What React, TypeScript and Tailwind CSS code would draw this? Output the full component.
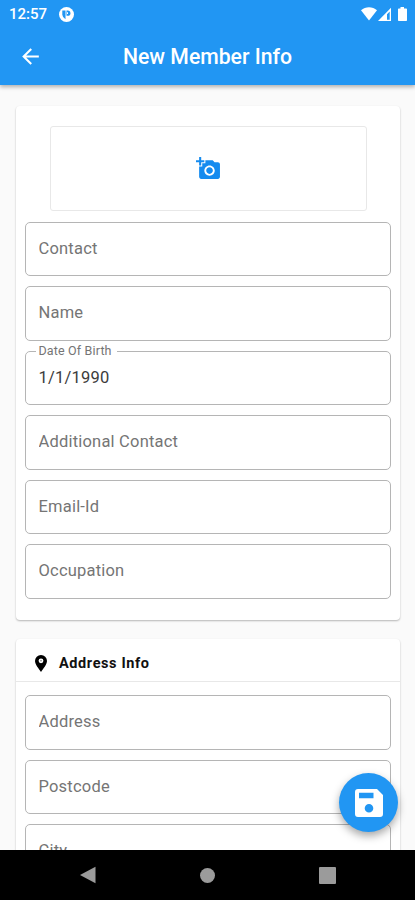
import { useState } from 'react';
import { MdAddAPhoto, MdArrowBack } from 'react-icons/md';

interface FieldProps {
  label: string;
  value?: string;
}

const memberFields: FieldProps[] = [
  { label: 'Contact' },
  { label: 'Name' },
  { label: 'Date Of Birth', value: '1/1/1990' },
  { label: 'Additional Contact' },
  { label: 'Email-Id' },
  { label: 'Occupation' },
];

const addressFields: FieldProps[] = [
  { label: 'Address' },
  { label: 'Postcode' },
  { label: 'City' },
];

function StatusBar() {
  return (
    <div className="flex h-7 items-center justify-between pr-[7px] pl-[9px] text-white">
      <div className="flex items-center gap-[11.5px]">
        <span className="text-[15px] leading-7 font-medium">12:57</span>
        <svg className="h-[15px] w-[15px]" viewBox="0 0 15 15">
          <circle cx="7.5" cy="7.5" r="7.5" fill="#fff" />
          <path d="M3.3 3.6h3.2v8.6a5.5 5.5 0 0 1-3.2-4.400z" fill="#2196f3" />
          <path d="M7.500 3.600h1.300a2.600 2.600 0 0 1 0 5.200H7.500z" fill="#2196f3" />
          <path d="M8 5.300h1v1.800H8z" fill="#fff" />
        </svg>
      </div>
      <svg className="h-[15px] w-[47px]" viewBox="0 0 47 15" fill="#fff">
        <path d="M0 3.2C4.5-.7 11.500-.7 16 3.200L8 13.500z" />
        <path fillRule="evenodd" d="M17 14L30 .8V14zM26 12.700h2.700V4.500L26 7.200z" />
        <path d="M39.500 0h3.500v1.500h2.200q.8 0 .8.800V13.200q0 .8-.8.800h-7.400q-.8 0-.8-.8V2.300q0-.8.800-.8h1.700z" />
      </svg>
    </div>
  );
}

function Header() {
  return (
    <header className="z-10 h-[85px] shrink-0 bg-[#2196f3] shadow-[0_2px_4px_rgba(0,0,0,0.3)]">
      <StatusBar />
      <div className="grid h-[57px] grid-cols-[60px_1fr_60px] items-center text-white">
        <button className="flex justify-center" aria-label="Back">
          <MdArrowBack className="h-[25px] w-[25px]" />
        </button>
        <h1 className="text-center text-[21.200px] leading-7 font-medium">New Member Info</h1>
      </div>
    </header>
  );
}

function Field({ label, value }: FieldProps) {
  const [text, setText] = useState(value ?? '');

  return (
    <fieldset className="h-[54.500px] min-w-0 rounded-[5px] border border-[#b5b5b5] px-[12.500px]">
      {value && (
        <legend className="-ml-[3px] h-0 pr-[5px] pl-[3px] text-[12.500px] leading-[0px] tracking-[0.15px] text-[#757575]">
          {label}
        </legend>
      )}
      <input
        className="block h-[51px] w-full bg-transparent text-[16.500px] tracking-[0.2px] text-[#3c3c3c] outline-none placeholder:text-[#757575]"
        aria-label={label}
        placeholder={value ? undefined : label}
        value={text}
        onChange={(e) => setText(e.target.value)}
      />
    </fieldset>
  );
}

function NavigationBar() {
  return (
    <nav className="z-10 grid h-[50px] shrink-0 grid-cols-3 items-center justify-items-center bg-black px-[28px]">
      <svg className="h-[18px] w-[18px]" viewBox="0 0 18 18" fill="#9b9b9b">
        <path d="M1 9L16.500 .7V17.300z" />
      </svg>
      <div className="h-[15px] w-[15px] rounded-full bg-[#9b9b9b]" />
      <div className="h-[17px] w-[17px] rounded-[1px] bg-[#9b9b9b]" />
    </nav>
  );
}

export default function App() {
  return (
    <div className="relative flex h-[900px] w-[415px] flex-col overflow-hidden bg-[#fafafa] font-['Roboto',sans-serif]">
      <Header />

      <main className="min-h-0 flex-1 overflow-hidden pt-[21px] pr-[15px] pl-4">
        {/* Member details */}
        <section className="h-[514px] rounded-[4px] bg-white px-[9px] pt-[19.500px] shadow-[0_1px_2px_rgba(0,0,0,0.28)]">
          <button
            className="mx-auto flex h-[85.500px] w-[317px] items-center justify-center rounded-[3px] border border-[#e8e8e8]"
            aria-label="Add photo"
          >
            <MdAddAPhoto className="h-[25px] w-[25px] text-[#158bef]" />
          </button>
          <div className="mt-[10.500px] flex flex-col gap-[10px]">
            {memberFields.map((field) => (
              <Field key={field.label} {...field} />
            ))}
          </div>
        </section>

        {/* Address details */}
        <section className="mt-[19px] rounded-[4px] bg-white shadow-[0_1px_2px_rgba(0,0,0,0.28)]">
          <div className="flex h-[43px] items-center gap-3 border-b border-[#e8e8e8] pt-[7px] pl-[19px]">
            <svg className="h-[17px] w-[12px]" viewBox="0 0 12 17">
              <path d="M6 0a6 6 0 0 1 6 6c0 3.500-4 8-6 11C4 14 0 9.500 0 6a6 6 0 0 1 6-6z" fill="#000" />
              <circle cx="6" cy="5.800" r="2.400" fill="#fff" />
              <circle cx="6" cy="5.800" r=".8" fill="#777" />
            </svg>
            <h2 className="text-[14.500px] font-bold tracking-[0.600px] text-[#111]">Address Info</h2>
          </div>
          <div className="flex flex-col gap-[10px] px-[9px] pt-[13px] pb-5">
            {addressFields.map((field) => (
              <Field key={field.label} {...field} />
            ))}
          </div>
        </section>
      </main>

      <button
        className="absolute top-[773px] left-[339px] z-10 flex h-[59px] w-[59px] items-center justify-center rounded-full bg-[#2196f3] text-white shadow-[0_4px_8px_rgba(0,0,0,0.35)]"
        aria-label="Save"
      >
        <svg className="h-[28px] w-[28px]" viewBox="0 0 28 28" fill="currentColor">
          <path
            fillRule="evenodd"
            d="M3 0h19l6 6v19a3 3 0 0 1-3 3H3a3 3 0 0 1-3-3V3a3 3 0 0 1 3-3zM4 3.700v5.500h14.500V3.700zM14 15a4.300 4.300 0 1 0 0 8.600 4.300 4.300 0 0 0 0-8.600z"
          />
        </svg>
      </button>

      <NavigationBar />
    </div>
  );
}
